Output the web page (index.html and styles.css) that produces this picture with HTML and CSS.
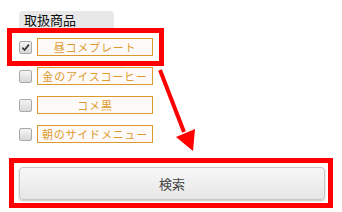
FILE: index.html
```html
<!DOCTYPE html>
<html lang="ja">

<head>
    <meta charset="UTF-8">
    <title>取扱商品</title>
    <link rel="stylesheet" href="styles.css">
</head>

<body>
    <div class="search-panel">
        <div class="group-title">取扱商品</div>

        <ul class="item-list">
            <li class="item-row">
                <span class="check checked">
                    <svg viewBox="0 0 10 10" width="9" height="9"><path d="M1.5 5.2 L4 7.8 L8.8 1.8" fill="none" stroke="#333" stroke-width="1.8"/></svg>
                </span>
                <span class="item-label">昼コメプレート</span>
            </li>
            <li class="item-row">
                <span class="check"></span>
                <span class="item-label">金のアイスコーヒー</span>
            </li>
            <li class="item-row">
                <span class="check"></span>
                <span class="item-label">コメ黒</span>
            </li>
            <li class="item-row">
                <span class="check"></span>
                <span class="item-label">朝のサイドメニュー</span>
            </li>
        </ul>

        <div class="button-row">
            <button class="search-button">検索</button>
        </div>
    </div>

    <!-- annotation overlay -->
    <div class="mark mark-item"></div>
    <div class="mark mark-button"></div>
    <svg class="mark-arrow" width="342" height="212" viewBox="0 0 342 212">
        <line x1="160" y1="70" x2="184" y2="132" stroke="#ff0000" stroke-width="4"/>
        <polygon points="176,137 195,129 193,151" fill="#ff0000"/>
    </svg>
</body>

</html>
```

FILE: styles.css
```css
body {
    margin: 0;
    font-family: "Noto Sans CJK JP", "Liberation Sans", sans-serif;
    background-color: #fff;
    width: 342px;
    height: 212px;
    overflow: hidden;
}

.search-panel {
    padding: 11px 17px 0 19px;
}

.group-title {
    width: 90px;
    height: 18px;
    padding-left: 5px;
    background-color: #e8e8e8;
    border-radius: 4px 4px 0 0;
    font-size: 13px;
    line-height: 18px;
    color: #111;
}

.item-list {
    list-style: none;
    margin: 9px 0 0;
    padding: 0;
}

.item-row {
    display: flex;
    align-items: center;
    height: 18px;
    margin-bottom: 11px;
}

.check {
    display: flex;
    align-items: center;
    justify-content: center;
    width: 11px;
    height: 11px;
    border: 1px solid #a8a8a8;
    border-radius: 2px;
    background: linear-gradient(#f4f4f4, #d8d8d8);
    margin-right: 5px;
}

.item-label {
    width: 114px;
    height: 16px;
    border: 1px solid #dc9a2a;
    background-color: #fffafa;
    color: #dc9a2a;
    font-size: 11px;
    line-height: 16px;
    text-align: center;
    letter-spacing: 0.8px;
    white-space: nowrap;
}

.button-row {
    margin-top: 24px;
}

.search-button {
    width: 306px;
    height: 33px;
    border: 1px solid #c8c8c8;
    border-radius: 4px;
    background: linear-gradient(#f8f8f8, #e6e6e6);
    box-shadow: 0 1px 2px rgba(0, 0, 0, 0.25);
    font-family: "Noto Sans CJK JP", "Liberation Sans", sans-serif;
    font-size: 13px;
    color: #444;
}

.mark {
    position: absolute;
    border: 5px solid #ff0000;
    box-sizing: border-box;
}

.mark-item {
    left: 7px;
    top: 28px;
    width: 157px;
    height: 38px;
}

.mark-button {
    left: 9px;
    top: 158px;
    width: 324px;
    height: 50px;
}

.mark-arrow {
    position: absolute;
    left: 0;
    top: 0;
}
```
